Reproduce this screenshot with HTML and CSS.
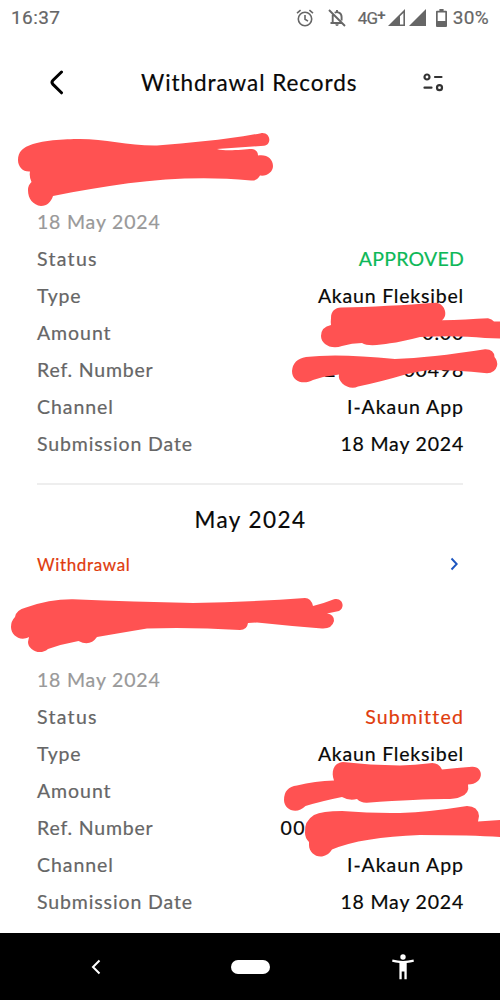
FILE: index.html
```html
<!DOCTYPE html>
<html lang="en">
<head>
<meta charset="utf-8">
<title>Withdrawal Records</title>
<link rel="stylesheet" href="styles.css">
</head>
<body>
<div class="screen">
  <div class="statusbar">
    <span class="clock">16:37</span>
    <div class="indicators">
      <svg class="alarm" width="18" height="18" viewBox="0 0 18 18" fill="none" stroke="#666" stroke-width="1.6"><circle cx="9" cy="10" r="6.7"/><path d="M9 6v4.3l3 1.8M1 4.2l3.6-3M17 4.2l-3.6-3"/></svg>
      <svg class="bell" width="18" height="18" viewBox="0 0 18 18" fill="none" stroke="#666" stroke-width="1.9"><path d="M1 1l16 16M4.7 5.8v7.4M2.5 14h11M6.7 3.8C8.7 2.5 13.6 3 13.6 8v3.5M9 1v2"/><path d="M7.3 15.3h3.4a1.7 1.7 0 0 1-3.4 0z" fill="#666" stroke="none"/></svg>
      <span class="network">4G<span class="plus">+</span></span>
      <svg class="signal" width="17" height="17" viewBox="0 0 17 17"><path d="M0 17L17 0v17zM12 7.3v8.2h3.4V4z" fill="#666" fill-rule="evenodd"/></svg>
      <svg class="signal2" width="17" height="17" viewBox="0 0 17 17"><path d="M0 17L17 0v17z" fill="#666"/></svg>
      <svg class="battery" width="11" height="18" viewBox="0 0 11 18"><path d="M3.4 0h4.2v1.8H10q1 0 1 1V17q0 1-1 1H1q-1 0-1-1V2.8q0-1 1-1h2.4zM1.7 3.5V12h7.6V3.5z" fill="#666" fill-rule="evenodd"/></svg>
      <span class="percent">30%</span>
    </div>
  </div>
  <header class="header">
    <svg class="back" width="14" height="25" viewBox="0 0 14 25" fill="none" stroke="#000" stroke-width="3" stroke-linecap="round" stroke-linejoin="round"><path d="M11.5 2L3 10.300q-2 2 0 4.100L11.500 22.800"/></svg>
    <h1 class="title">Withdrawal Records</h1>
    <svg class="filter" width="21" height="20" viewBox="0 0 21 20" fill="none" stroke="#333" stroke-width="2.2" stroke-linecap="round"><circle cx="4" cy="4" r="2.500"/><path d="M12 4h6.500M1.500 14.700h7"/><circle cx="16.500" cy="14.700" r="2.500"/></svg>
  </header>
  <main class="content">
    <section class="record">
      <p class="date">18 May 2024</p>
      <div class="row"><span class="label l-status">Status</span><span class="value approved">APPROVED</span></div>
      <div class="row"><span class="label">Type</span><span class="value v-type">Akaun Fleksibel</span></div>
      <div class="row"><span class="label l-amount">Amount</span><span class="value">0.00</span></div>
      <div class="row"><span class="label">Ref. Number</span><span class="value"><span class="lead">2</span>00498</span></div>
      <div class="row"><span class="label l-amount">Channel</span><span class="value v-channel">I-Akaun App</span></div>
      <div class="row"><span class="label l-sub">Submission Date</span><span class="value">18 May 2024</span></div>
    </section>
    <h2 class="month">May 2024</h2>
    <div class="category">
      <span>Withdrawal</span>
      <svg class="more" width="8" height="14" viewBox="0 0 8 14" fill="none" stroke="#1d56c0" stroke-width="1.900"><path d="M1.500 1.500L6.700 7 1.500 12.500"/></svg>
    </div>
    <section class="record second">
      <p class="date">18 May 2024</p>
      <div class="row"><span class="label l-status">Status</span><span class="value submitted">Submitted</span></div>
      <div class="row"><span class="label">Type</span><span class="value v-type">Akaun Fleksibel</span></div>
      <div class="row"><span class="label l-amount">Amount</span></div>
      <div class="row"><span class="label">Ref. Number</span><span class="value partial">00</span></div>
      <div class="row"><span class="label l-amount">Channel</span><span class="value v-channel">I-Akaun App</span></div>
      <div class="row"><span class="label l-sub">Submission Date</span><span class="value">18 May 2024</span></div>
    </section>
  </main>
  <nav class="navbar">
    <svg width="10" height="16" viewBox="0 0 10 16" fill="none" stroke="#fff" stroke-width="2"><path d="M8.500 1.500L2 8l6.500 6.500"/></svg>
    <span class="home"></span>
    <svg width="22" height="26" viewBox="0 0 22 26" fill="#fff"><circle cx="11" cy="3" r="2.700"/><path d="M.5 5.500Q11 8.400 21.500 5.500l.4 2.200Q18.500 8.700 14.700 9v16.200h-2.300v-7.700H9.700v7.700H7.400V9Q3.500 8.700.1 7.700z"/></svg>
  </nav>
  <svg class="marks" width="500" height="1000" viewBox="0 0 500 1000" fill="#ff5252">
    <path d="M28 146C40 140 65 139 80 139C105 139 130 146 157 145.500C190 143 225 140 261 133.200C271 132 272 145 264 145.700L217 149C228 152 243 149 252 149Q258 150 258 155.500C267 154 273 159 273 166C273 172 267 176.500 260 175.500Q257 181 251 180.500C180 174 120 183 53 196C51 202 47 206 41 206C33 205 28 199 28 190Q28 185 31.500 182Q29 177 30 171.500C23 172 18 167 18 160C18 152 23 148 28 146Z"/>
    <path d="M331 318C331 311 335 308 341 307.500C370 307 405 305 436 302.700C444 303 449 315 442 320.300C458 320 474 319 488 318.300Q492 319 494 321.500H500V338.500L485 338Q457 335 420 337Q401 342 390 343.300C380 345 367 346.500 362 343Q352 343 342 346C331 350 321 344 321 336Q321 327 331 325Q330.500 322 331 318Z"/>
    <path d="M292 371Q293 359 306 357Q337 353 395 359Q430 358 485 349.300Q494 349 494.500 357Q498 361 497 366Q495 373 487 373.300Q455 370 430 370Q420 371 407 374Q380 382 358 386.500C349 391 337 382 339 374.500Q325 376 313 380C304 385 292 382 292 371Z"/>
    <path d="M11 627Q11 621 15 617Q16 610 26 607.500Q50 599 73 599.300Q135 602 193 603Q250 602 305 598Q311 598 313 606Q325 603 334 599.300C342 597 346 607 339 611L327 613.500Q334 614 334 621Q332 629 322 628.500Q290 626 257 622.500L248 623Q247 630 240 630Q190 627 147 628.500Q120 633 97 637Q90 647 78.500 641Q62 644 48 649C40 656 28 650 28 642L29 637C20 642 11 635 11 627Z"/>
    <path d="M284 800Q284 787 297 785.500Q315 781 334 780.500C331 772 333 763 343 762Q369 765 400 765.500Q415 765 430 763.300Q438 762 442 769.500Q457 768 472 766.700C484 766 485 784 468 784.500Q470 794 460 797Q456 799 445 799Q420 799 367 802.700Q361 803 357 799Q349 801 342 797Q322 801 305.500 806C297 815 284 810 284 800Z"/>
    <path d="M305 833Q304 821 314 815Q322 811 342 811Q372 813.500 400 813Q430 812 467 806Q478 806 479 816L478 821.500L500 820V837Q472 835 420 835Q362 837 332 849.500C324 862 309 856 309 845V842Q305 838 305 833Z"/>
  </svg>
</div>
</body>
</html>
```
FILE: styles.css
```css
* { box-sizing: border-box; }
body { margin: 0; background: #fff; font-family: Lato, sans-serif; color: #080808; }
h1, h2, p { margin: 0; font-weight: 400; }
svg { display: block; flex: none; }
.screen { position: relative; width: 500px; height: 1000px; overflow: hidden; display: flex; flex-direction: column; }
.statusbar { height: 35px; padding: 0 11px 0 11px; display: flex; justify-content: space-between; align-items: center; font-family: Roboto, sans-serif; font-size: 19px; color: #666; -webkit-text-stroke: .2px; }
.clock { letter-spacing: .4px; }
.indicators { display: flex; align-items: center; }
.bell { margin-left: 14px; }
.network { margin-left: 12px; font-size: 17px; letter-spacing: -.8px; display: flex; }
.plus { font-size: 15px; line-height: 14px; font-weight: 500; }
.signal { margin-left: 3px; }
.signal2 { margin-left: 4px; }
.battery { margin-left: 10px; }
.percent { margin-left: 6px; letter-spacing: .3px; }
.header { height: 95px; padding: 0 56px 0 50px; display: flex; align-items: center; }
.back { margin-right: 77px; }
.title { font-size: 22.5px; letter-spacing: .95px; -webkit-text-stroke: .2px; white-space: nowrap; }
.filter { margin-left: auto; }
.content { height: 803px; padding: 73px 36px 0 37px; -webkit-text-stroke: .2px; }
.record { font-size: 19.5px; border-bottom: 2px solid #eee; height: 282px; letter-spacing: .8px; margin-right: 1px; }
.date { height: 37px; line-height: 37px; color: #999; }
.row { height: 37.1px; line-height: 37.1px; display: flex; justify-content: space-between; white-space: nowrap; margin-right: -1px; }
.label { color: #666; }
.l-status { letter-spacing: 1.3px; }
.l-amount { letter-spacing: .95px; }
.l-sub { letter-spacing: .88px; }
.approved { color: #0db858; letter-spacing: .25px; }
.submitted { color: #e03b0c; letter-spacing: 1.2px; }
.v-channel { letter-spacing: .95px; }
.lead { margin-right: 67px; }
.partial { padding-right: 158px; letter-spacing: 1.4px; }
.month { height: 70px; line-height: 70px; text-align: center; font-size: 22.5px; letter-spacing: 1.45px; }
.category { height: 20px; display: flex; align-items: center; justify-content: space-between; padding-right: 6px; color: #e03b0c; font-size: 17px; letter-spacing: .65px; margin-top: -1px; }
.second { margin-top: 87px; border: 0; height: 272px; }
.navbar { height: 67px; background: #000; display: flex; align-items: center; padding: 0 86px 0 91px; }
.home { width: 39px; height: 14px; border-radius: 7px; background: #fff; margin: 0 auto 0 129.5px; }
.marks { position: absolute; left: 0; top: 0; pointer-events: none; }
```
